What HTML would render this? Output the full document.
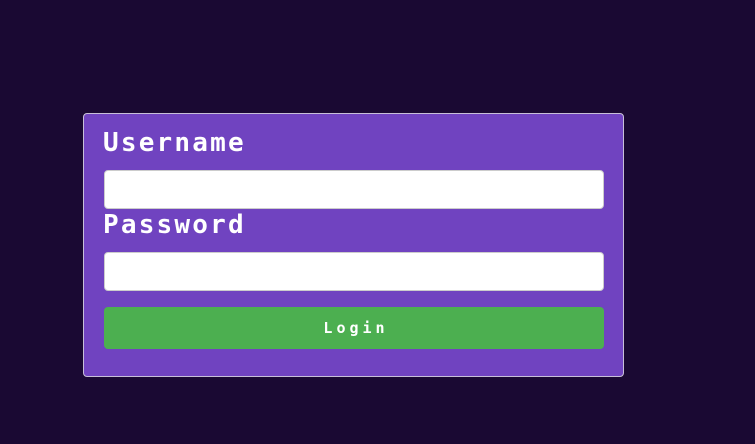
<!DOCTYPE html>
<html><head><meta charset="utf-8"><style>
html,body{margin:0;padding:0;width:755px;height:444px;background:#1a0933;overflow:hidden}
.card{position:absolute;left:83px;top:113px;width:539px;height:262px;background:#7043c0;border:1px solid #c8c0d8;border-radius:4px}
.lbl{position:absolute;left:19px;color:#fff;font:bold 26px "DejaVu Sans Mono",monospace;letter-spacing:2.2px;line-height:26px}
.inp{position:absolute;left:20px;height:39px;background:#fff;border:1px solid #ccc;border-radius:4px;box-sizing:border-box;width:500px}
.btn{position:absolute;left:20px;top:193px;width:500px;height:42px;background:#4caf50;border-radius:4px;color:#fff;font:bold 15px "DejaVu Sans Mono",monospace;letter-spacing:4px;text-align:center;line-height:42px;text-indent:4px}
</style></head><body>
<div class="card">
<div class="lbl" style="top:16px">Username</div>
<div class="inp" style="top:56px"></div>
<div class="lbl" style="top:98px">Password</div>
<div class="inp" style="top:138px"></div>
<div class="btn">Login</div>
</div>
</body></html>
